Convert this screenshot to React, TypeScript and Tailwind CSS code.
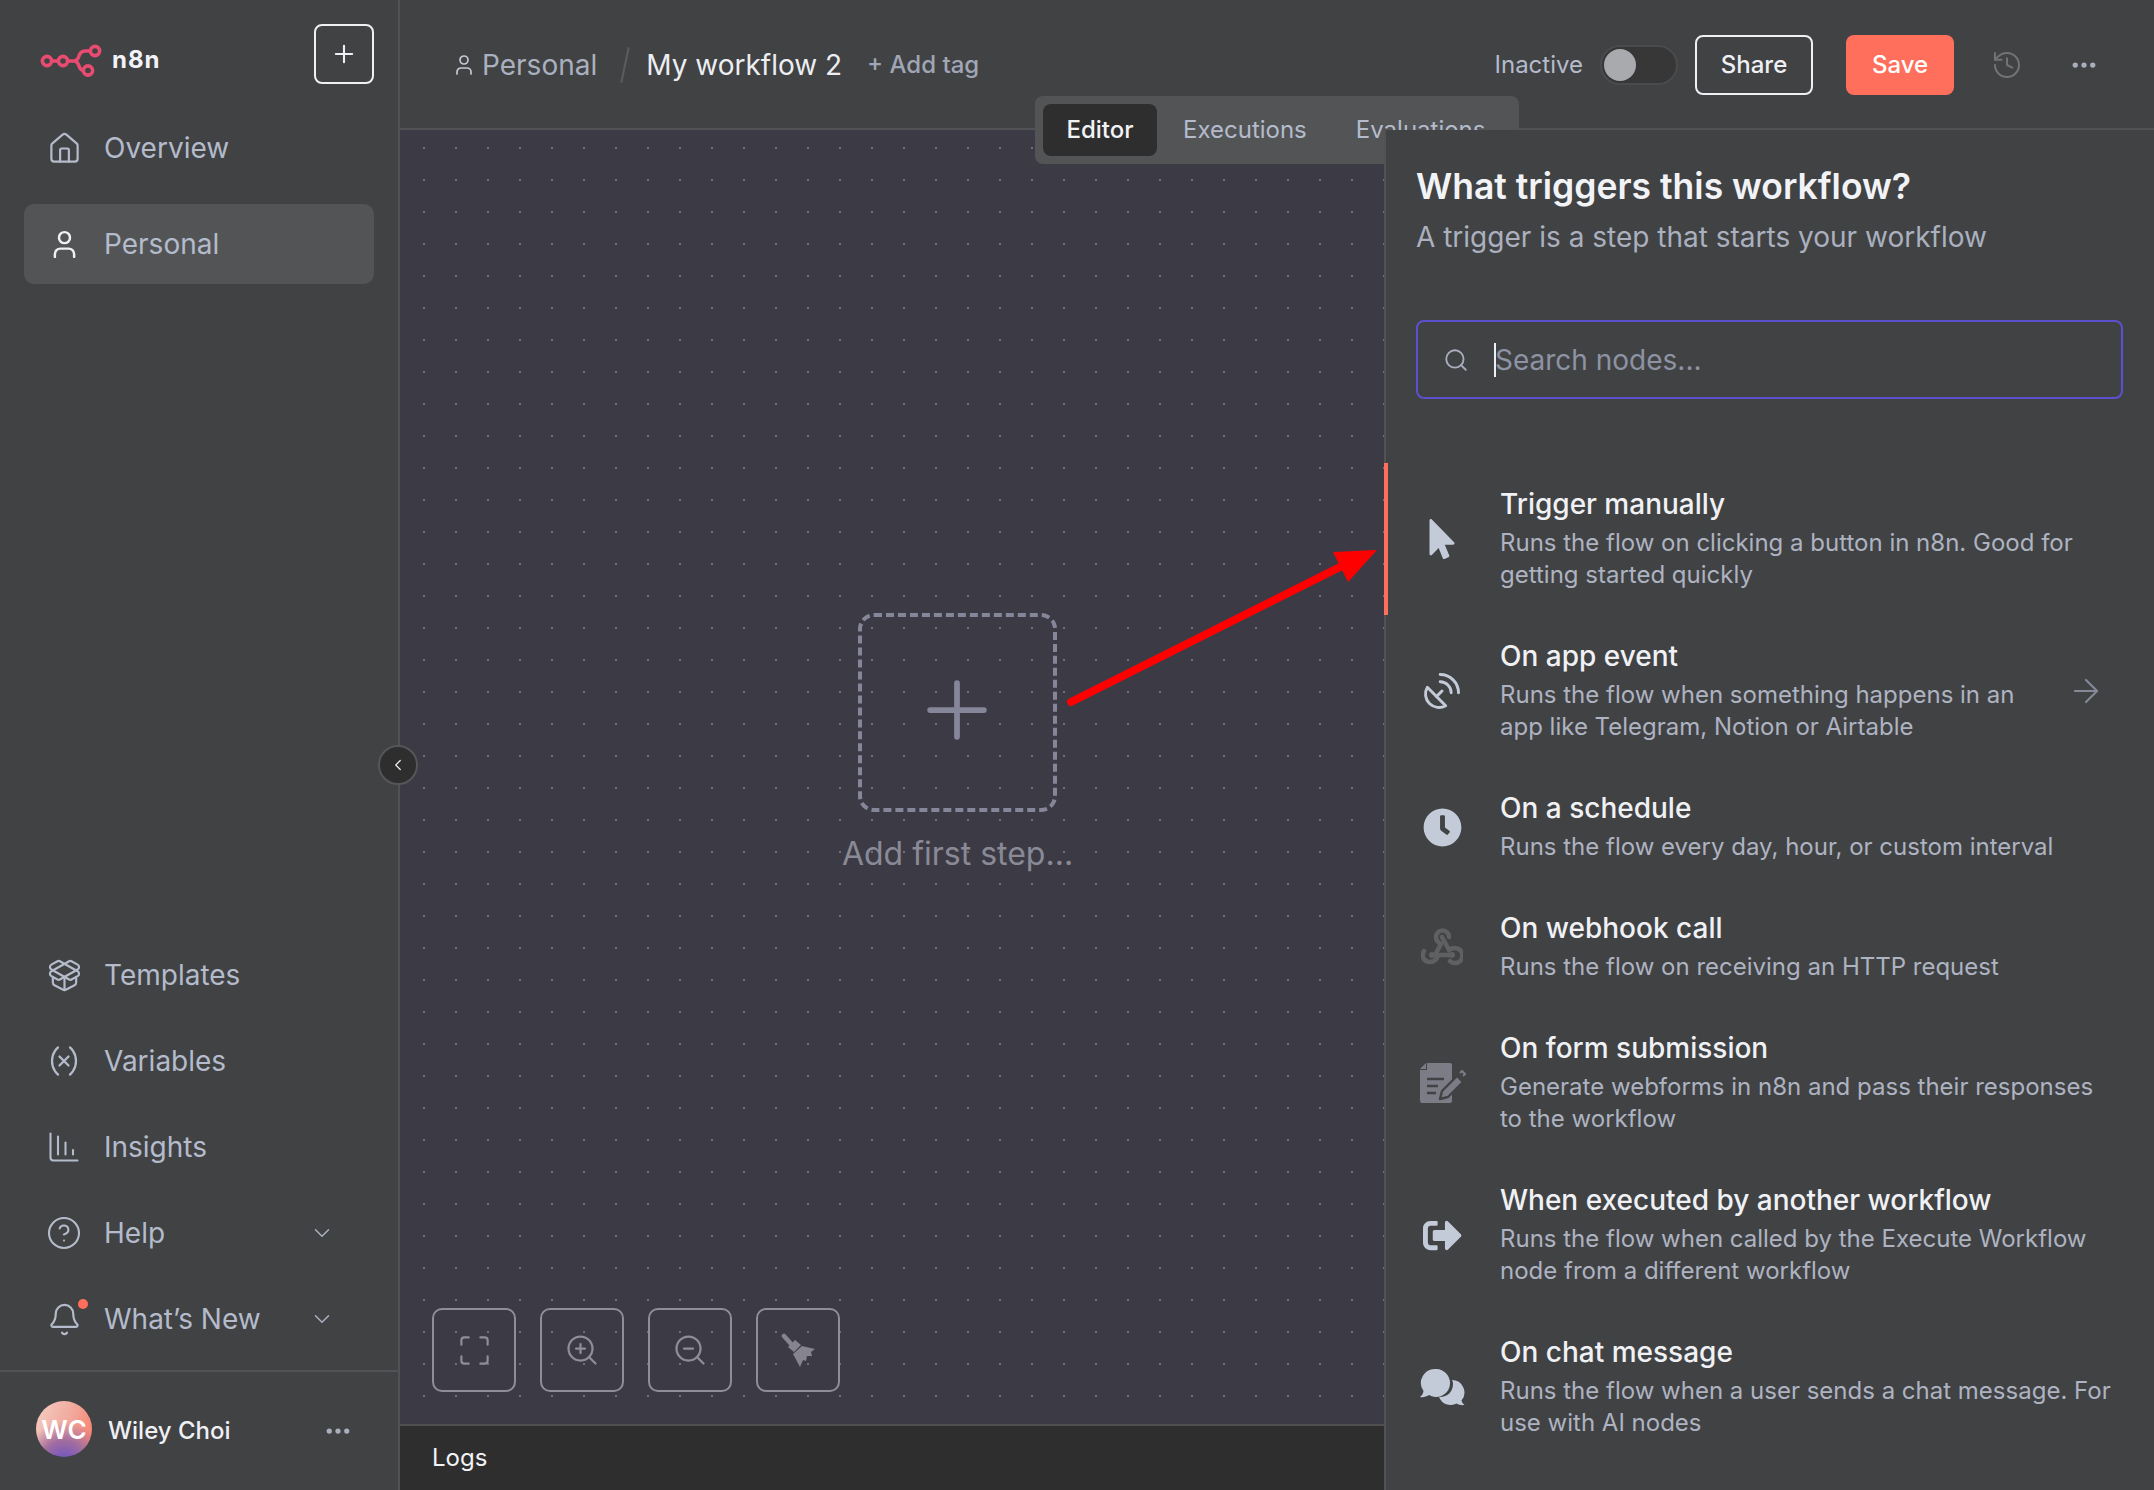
import React from "react";
import {
  ArrowRight,
  Bell,
  ChartColumnDecreasing,
  ChevronDown,
  ChevronLeft,
  CircleHelp,
  Ellipsis,
  History,
  House,
  Maximize,
  PackageOpen,
  Plus,
  SatelliteDish,
  Search,
  User,
  Variable,
  ZoomIn,
  ZoomOut,
} from "lucide-react";
import { FaClock, FaMousePointer, FaSignOutAlt } from "react-icons/fa";

function N8nLogo() {
  return (
    <svg width="62" height="34" viewBox="39 42 62 34" fill="none" stroke="#ea4b71" strokeWidth="3.6">
      <circle cx="46" cy="60" r="4.6" />
      <circle cx="62" cy="60" r="4.6" />
      <circle cx="94" cy="50" r="4.6" />
      <circle cx="87" cy="69.5" r="4.6" />
      <path d="M50.6 60h6.8M66.6 60h6.4c3 0 4-2 5-5s3-5 6-5h5.4M73 60c3 0 4 2 5 5s2 4.500 4.400 4.500" />
    </svg>
  );
}

function WebhookIcon() {
  return (
    <svg width="42" height="40" viewBox="0 0 42 40" fill="none" stroke="#5f6062" strokeWidth="4.5" strokeLinecap="round">
      <path d="M14 28 20 17c-3-1.500-5-4-5-7a6.500 6.500 0 0 1 13 0" />
      <path d="M21 10l7 13c2-1.500 4-2 6-2a7 7 0 0 1 0 15c-2 0-4-.6-5-2" />
      <path d="M29 28H17c-.5 4-4 7-8 7a7 7 0 0 1-6-11" />
      <circle cx="11" cy="28" r="3" fill="#5f6062" stroke="none" />
      <circle cx="21" cy="10" r="2" fill="#5f6062" stroke="none" />
      <circle cx="31" cy="28" r="3" fill="#5f6062" stroke="none" />
    </svg>
  );
}

function FormIcon() {
  return (
    <svg width="47" height="42" viewBox="0 0 47 42" fill="none">
      <path d="M8 1h23a2 2 0 0 1 2 2v36a2 2 0 0 1-2 2H3a2 2 0 0 1-2-2V8h7z" fill="#7b7c86" />
      <path d="M1 7l6-6v6z" fill="#7b7c86" />
      <path d="M8 17h17M8 24h11M8 31h9" stroke="#414244" strokeWidth="2.400" />
      <path d="M21 37l2-8 15-15 6 6-15 15z" fill="#7b7c86" stroke="#414244" strokeWidth="2.400" strokeLinejoin="round" />
      <path d="M41 11l2-2 3 3-2 2" stroke="#7b7c86" strokeWidth="2" />
    </svg>
  );
}

function ChatIcon() {
  return (
    <svg width="46" height="38" viewBox="0 0 46 38" fill="#c3cad8">
      <path d="M17 1a14 14 0 1 1-7 26.100C7 29 4 29.500 1 29c2-1.500 3.200-3.500 3.500-6A14 14 0 0 1 17 1z" />
      <path d="M33 12a12.500 12.500 0 0 1 9.500 20.500c.4 1.800 1.500 3.300 3 4.500-3 .4-5.500 0-8-1.400A12.500 12.500 0 0 1 20 29c8 .4 14-5 14-13 0-1.400-.3-2.700-1-4z" />
    </svg>
  );
}

function BroomIcon() {
  return (
    <svg width="35" height="34" viewBox="0 0 35 34" fill="#85848f">
      <path d="M3 3l8 9" stroke="#85848f" strokeWidth="4.500" strokeLinecap="round" />
      <path d="M7 14l7-7 6 5-7 7z" />
      <path d="M12 21l9-8 13 3-4 3 1 4-5 0-1 5-3-1-3 7z" />
    </svg>
  );
}

const topNav = [
  { label: "Overview", icon: <House size={35} strokeWidth={1.5} />, active: false },
  { label: "Personal", icon: <User size={33} strokeWidth={1.8} className="text-[#eef0f4]" />, active: true },
];

const bottomNav = [
  { label: "Templates", icon: <PackageOpen size={35} strokeWidth={1.5} /> },
  { label: "Variables", icon: <Variable size={36} strokeWidth={1.5} /> },
  { label: "Insights", icon: <ChartColumnDecreasing size={36} strokeWidth={1.4} /> },
  { label: "Help", icon: <CircleHelp size={36} strokeWidth={1.4} />, chevron: true },
  { label: "What’s New", icon: <Bell size={35} strokeWidth={1.5} />, chevron: true, dot: true },
];

const triggers = [
  {
    title: "Trigger manually",
    desc: "Runs the flow on clicking a button in n8n. Good for getting started quickly",
    icon: <FaMousePointer size={40} color="#c3cad8" />,
    tall: true,
    active: true,
  },
  {
    title: "On app event",
    desc: "Runs the flow when something happens in an app like Telegram, Notion or Airtable",
    icon: <SatelliteDish size={44} color="#c3cad8" strokeWidth={1.6} />,
    tall: true,
    arrow: true,
  },
  {
    title: "On a schedule",
    desc: "Runs the flow every day, hour, or custom interval",
    icon: <FaClock size={39} color="#c3cad8" />,
  },
  {
    title: "On webhook call",
    desc: "Runs the flow on receiving an HTTP request",
    icon: <WebhookIcon />,
  },
  {
    title: "On form submission",
    desc: "Generate webforms in n8n and pass their responses to the workflow",
    icon: <FormIcon />,
    tall: true,
  },
  {
    title: "When executed by another workflow",
    desc: "Runs the flow when called by the Execute Workflow node from a different workflow",
    icon: <FaSignOutAlt size={39} color="#c3cad8" />,
    tall: true,
  },
  {
    title: "On chat message",
    desc: "Runs the flow when a user sends a chat message. For use with AI nodes",
    icon: <ChatIcon />,
    tall: true,
  },
];

function Sidebar() {
  return (
    <aside className="w-[400px] h-full flex-shrink-0 flex flex-col border-r-2 border-[#515255] bg-[#414244]">
      <div className="h-[84px] pl-[40px] pr-[24px] pt-[24px] flex items-start justify-between">
        <div className="flex items-center gap-[10px] mt-[19px]">
          <N8nLogo />
          <span className="text-[24px] leading-[30px] font-bold tracking-[1px] text-[#f2f3f7]">n8n</span>
        </div>
        <button className="w-[60px] h-[60px] flex items-center justify-center rounded-[8px] border-2 border-[#eef0f4] text-[#eef0f4]">
          <Plus size={28} strokeWidth={1.8} />
        </button>
      </div>

      <nav className="px-[24px] mt-[24px] flex flex-col gap-[16px]">
        {topNav.map((item) => (
          <div
            key={item.label}
            className={
              "h-[80px] flex items-center rounded-[10px] text-[#b4bbcb] " + (item.active ? "bg-[#535456]" : "")
            }
          >
            <span className="w-[80px] flex justify-center">{item.icon}</span>
            <span className="text-[28px] leading-[36px]">{item.label}</span>
          </div>
        ))}
      </nav>

      <nav className="mt-auto px-[24px] flex flex-col">
        {bottomNav.map((item) => (
          <div key={item.label} className="relative h-[86px] flex items-center text-[#b4bbcb]">
            <span className="w-[80px] flex justify-center">{item.icon}</span>
            <span className="text-[28px] leading-[36px]">{item.label}</span>
            {item.chevron && (
              <ChevronDown size={26} strokeWidth={1.4} className="absolute right-[39px] text-[#a9afbd]" />
            )}
            {item.dot && <span className="absolute left-[54px] top-[23px] w-[10px] h-[10px] rounded-full bg-[#ff6f5c]" />}
          </div>
        ))}
      </nav>

      <div className="h-[120px] mt-[8px] border-t-2 border-[#515255] pl-[36px] pr-[45px] pt-[29px] flex items-start">
        <div className="w-[56px] h-[56px] rounded-full flex items-center justify-center text-[26px] font-semibold text-white bg-[radial-gradient(circle_at_50%_110%,#6650c8_0%,#a06ca0_32%,transparent_60%),linear-gradient(110deg,#f3cfc4_0%,#f2a79b_55%,#f97a66_100%)]">
          WC
        </div>
        <span className="ml-[16px] mt-[14px] text-[24px] leading-[32px] font-medium text-[#eef0f4]">Wiley Choi</span>
        <Ellipsis size={30} strokeWidth={2.200} className="ml-auto mt-[15px] text-[#a9afbd]" />
      </div>
    </aside>
  );
}

function Header() {
  return (
    <header className="h-[130px] flex-shrink-0 border-b-2 border-[#515255] pl-[52px] pr-[55px] pt-[2px] flex items-center bg-[#414244]">
      <User size={24} strokeWidth={1.700} className="text-[#c3c8d4]" />
      <span className="ml-[6px] text-[28px] text-[#aab0be]">Personal</span>
      <span className="ml-[27px] w-[2px] h-[36px] rotate-[12deg] bg-[#5c5d60]" />
      <span className="ml-[20px] text-[28px] text-[#eceef2]">My workflow 2</span>
      <span className="ml-[25px] text-[24px] font-medium text-[#a0a6b5]">+ Add tag</span>

      <span className="ml-auto text-[24px] text-[#b4bbcb]">Inactive</span>
      <div className="ml-[17px] w-[78px] h-[40px] rounded-full border-2 border-[#4a4b4e] bg-[#373737] p-[2px]">
        <div className="w-[32px] h-[32px] rounded-full bg-[#a9aaae]" />
      </div>
      <button className="ml-[17px] w-[118px] h-[60px] rounded-[8px] border-2 border-[#eef0f4] text-[24px] font-medium text-[#eef0f4]">
        Share
      </button>
      <button className="ml-[33px] w-[108px] h-[60px] rounded-[8px] bg-[#ff6f5c] text-[24px] font-medium text-white">
        Save
      </button>
      <History size={32} strokeWidth={1.500} className="ml-[37px] text-[#727375]" />
      <Ellipsis size={30} strokeWidth={2.200} className="ml-[46px] text-[#a9afbd]" />
    </header>
  );
}

function Tabs() {
  return (
    <div className="absolute z-10 left-[635px] top-[96px] w-[484px] h-[68px] rounded-[8px] bg-[#535456] p-[8px] flex items-center">
      <div className="w-[114px] h-[52px] rounded-[8px] bg-[#2e2e2e] flex items-center justify-center text-[24px] font-medium text-[#f2f3f7]">
        Editor
      </div>
      <span className="ml-[26px] text-[24px] text-[#b4bbcb]">Executions</span>
      <span className="ml-[49px] text-[24px] text-[#b4bbcb]">Evaluations</span>
    </div>
  );
}

function Canvas() {
  return (
    <div className="relative flex-1 bg-[#3c3b45] bg-[radial-gradient(circle,#6f6e78_1px,transparent_1.300px)] bg-[size:32px_32px] bg-[position:8px_2px]">
      <div className="w-[199px] ml-[458px] mt-[483px] flex flex-col items-center">
        <div className="w-[199px] h-[199px] flex-shrink-0 rounded-[16px] border-[4px] border-dashed border-[#85869a] pb-[5px] pr-[2px] flex items-center justify-center text-[#85869a]">
          <Plus size={92} strokeWidth={1.500} />
        </div>
        <span className="mt-[22px] whitespace-nowrap text-[32px] leading-[40px] text-[#8a8996]">Add first step...</span>
      </div>

      <div className="absolute left-[32px] bottom-[32px] flex gap-[24px] text-[#8e8d99]">
        <div className="w-[84px] h-[84px] rounded-[10px] border-2 border-[#8e8d99] flex items-center justify-center">
          <Maximize size={35} strokeWidth={1.500} />
        </div>
        <div className="w-[84px] h-[84px] rounded-[10px] border-2 border-[#8e8d99] flex items-center justify-center">
          <ZoomIn size={36} strokeWidth={1.500} />
        </div>
        <div className="w-[84px] h-[84px] rounded-[10px] border-2 border-[#8e8d99] flex items-center justify-center">
          <ZoomOut size={36} strokeWidth={1.500} />
        </div>
        <div className="w-[84px] h-[84px] rounded-[10px] border-2 border-[#8e8d99] flex items-center justify-center">
          <BroomIcon />
        </div>
      </div>
    </div>
  );
}

function TriggerPanel() {
  return (
    <section className="absolute z-20 right-0 top-[130px] bottom-0 w-[770px] border-l-2 border-[#515255] bg-[#414244]">
      <div className="pl-[30px] pr-[31px] pt-[36px]">
        <h2 className="text-[35.500px] leading-[42px] font-semibold text-[#f2f3f7]">What triggers this workflow?</h2>
        <p className="mt-[11px] text-[28px] leading-[36px] text-[#aab0be]">A trigger is a step that starts your workflow</p>
        <div className="mt-[65px] h-[79px] rounded-[8px] border-2 border-[#5d50cf] flex items-center pl-[25px]">
          <Search size={26} strokeWidth={1.700} className="text-[#a9afbd]" />
          <span className="ml-[25px] w-[2px] h-[34px] bg-[#eef0f4]" />
          <span className="-ml-[1px] text-[28px] text-[#8d93a2]">Search nodes...</span>
        </div>
      </div>

      <div className="mt-[64px]">
        {triggers.map((item) => (
          <div
            key={item.title}
            className={"relative flex pt-[22px] " + (item.tall ? "h-[152px]" : "h-[120px]")}
          >
            {item.active && <span className="absolute left-[-2px] top-0 bottom-0 w-[4px] bg-[#ff6f5c]" />}
            <div className="w-[112px] mr-[2px] -mt-[22px] flex-shrink-0 flex items-center justify-center">{item.icon}</div>
            <div className={item.arrow ? "w-[530px]" : "w-[620px]"}>
              <div className="text-[28px] leading-[38px] font-medium text-[#f0f1f5]">{item.title}</div>
              <div className="mt-[4px] text-[24px] leading-[32px] text-[#aeb3c1]">{item.desc}</div>
            </div>
            {item.arrow && (
              <div className="absolute right-[49px] top-0 bottom-0 flex items-center">
                <ArrowRight size={38} strokeWidth={1.300} className="text-[#858a98]" />
              </div>
            )}
          </div>
        ))}
      </div>
    </section>
  );
}

export default function App() {
  return (
    <div className="w-full h-screen overflow-hidden flex font-['Inter',sans-serif] bg-[#414244]">
      <Sidebar />
      <main className="relative flex-1 flex flex-col">
        <Header />
        <Tabs />
        <Canvas />
        <div className="h-[66px] flex-shrink-0 border-t-2 border-[#504f4d] bg-[#2e2e2e] pl-[32px] flex items-center text-[24px] text-[#f2f3f7]">
          Logs
        </div>
        <TriggerPanel />
      </main>

      <button className="absolute left-[378px] top-[745px] w-[40px] h-[40px] rounded-full border-2 border-[#555659] bg-[#2e2e2e] flex items-center justify-center text-[#eef0f4]">
        <ChevronLeft size={18} strokeWidth={1.600} />
      </button>

      <svg className="absolute z-30 left-0 top-0 pointer-events-none" width="2154" height="1490">
        <path d="M1071 702L1342 566" stroke="#ff0000" strokeWidth="8" strokeLinecap="round" />
        <path d="M1377 550L1333 552L1348 582Z" fill="#ff0000" />
      </svg>
    </div>
  );
}
